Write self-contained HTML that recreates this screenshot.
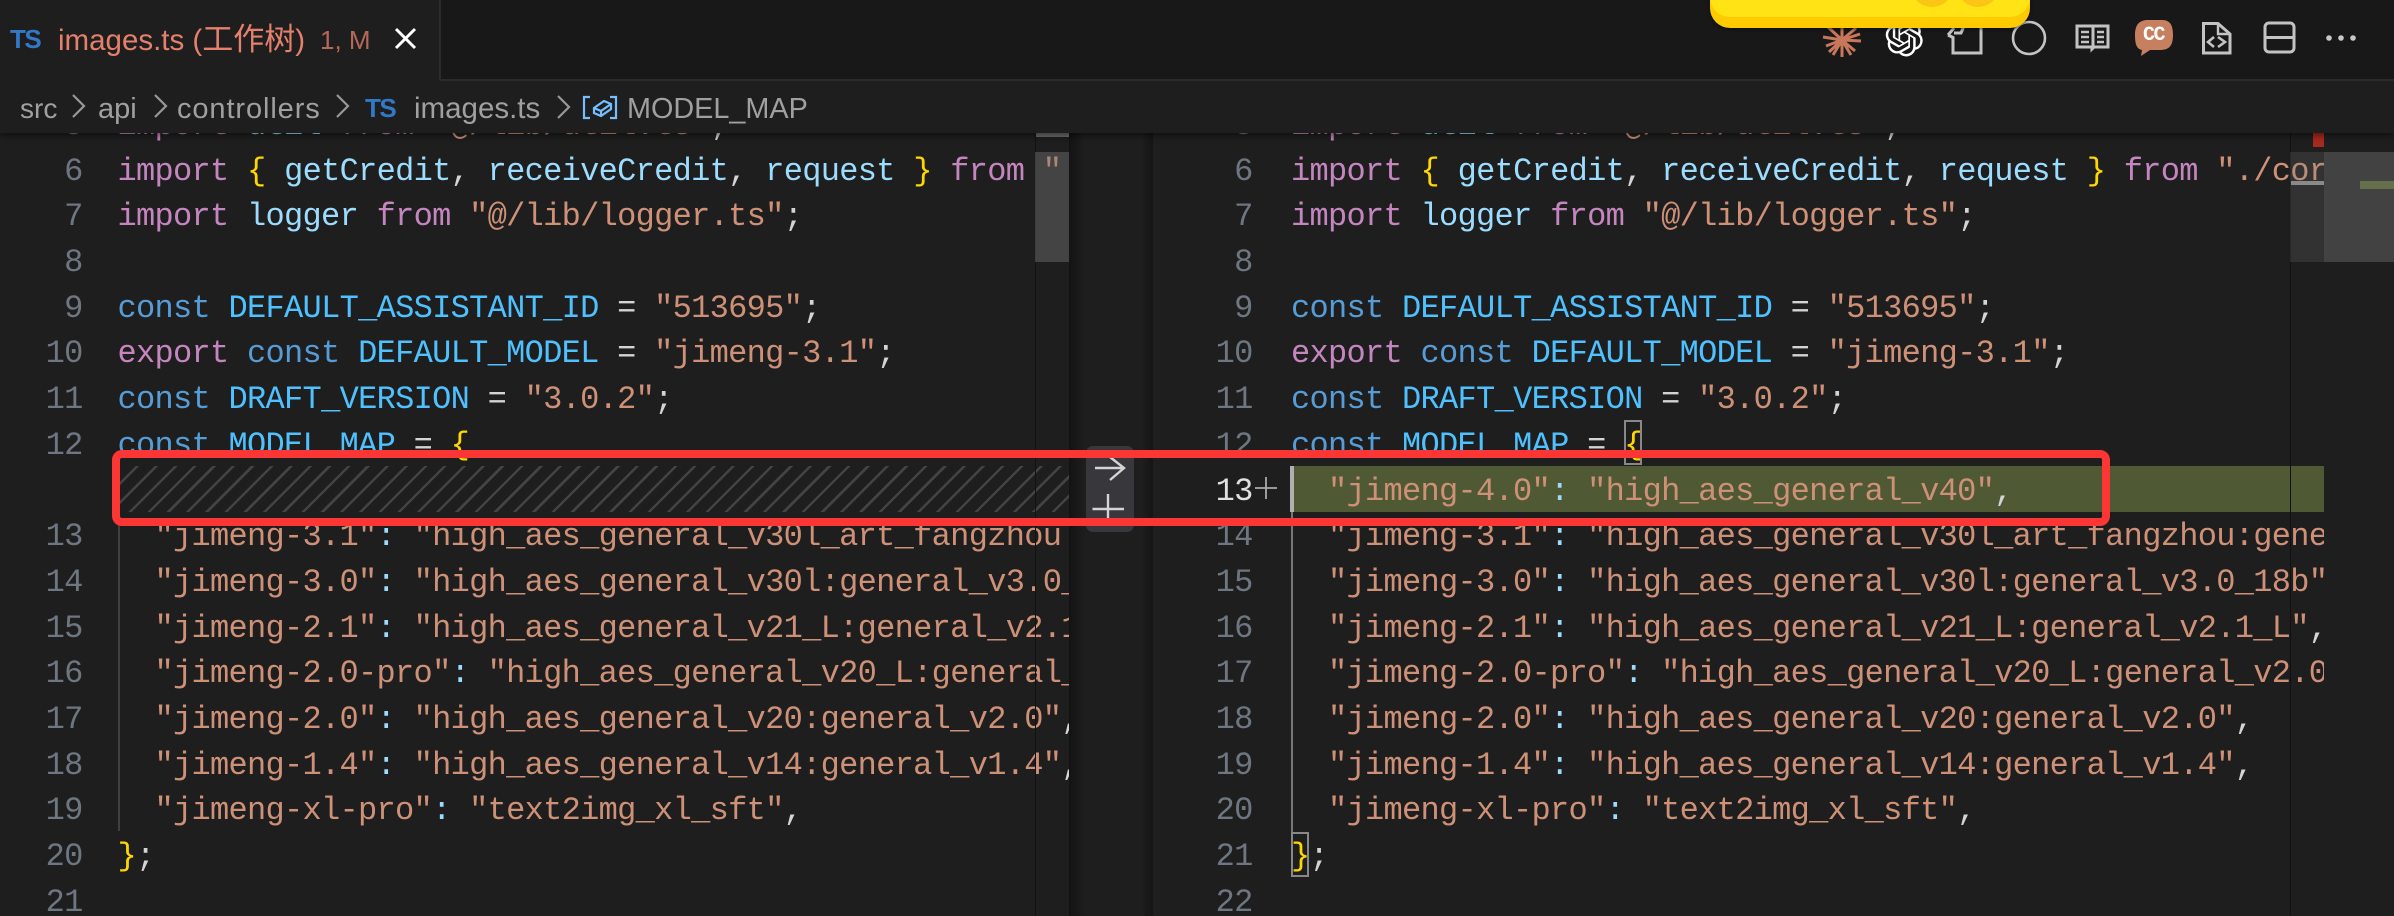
<!DOCTYPE html>
<html><head><meta charset="utf-8"><style>
html,body{margin:0;padding:0;background:#1e1e1e}
#r{position:relative;width:2394px;height:916px;overflow:hidden;background:#1e1e1e}
#r div,#r pre,#r span.a,#r svg{position:absolute}
pre{margin:0;font-family:"Liberation Mono",monospace;font-size:32px;letter-spacing:-.7px;line-height:45.7px;color:#d4d4d4;white-space:pre}
.k{color:#c586c0}.c{color:#569cd6}.v{color:#9cdcfe}.n{color:#4fc1ff}.s{color:#ce9178}.b{color:#ffd700}
.g{color:#6e7681;text-align:right}
.t{font-family:"Liberation Sans","Noto Sans CJK SC",sans-serif;white-space:nowrap;line-height:40px}
</style></head><body><div id="r">

<!-- left pane -->
<div style="left:0;top:100px;width:1069px;height:816px;overflow:hidden">
<pre class="g" style="left:0;top:2.9px;width:82.7px">5
6
7
8
9
10
11
12

13
14
15
16
17
18
19
20
21</pre>
<pre style="left:117.5px;top:2.9px"><span class="k">import</span> <span class="v">util</span> <span class="k">from</span> <span class="s">"@/lib/util.ts"</span>;
<span class="k">import</span> <span class="b">{</span> <span class="v">getCredit</span>, <span class="v">receiveCredit</span>, <span class="v">request</span> <span class="b">}</span> <span class="k">from</span> <span class="s">"./core.ts"</span>;
<span class="k">import</span> <span class="v">logger</span> <span class="k">from</span> <span class="s">"@/lib/logger.ts"</span>;

<span class="c">const</span> <span class="n">DEFAULT_ASSISTANT_ID</span> = <span class="s">"513695"</span>;
<span class="k">export</span> <span class="c">const</span> <span class="n">DEFAULT_MODEL</span> = <span class="s">"jimeng-3.1"</span>;
<span class="c">const</span> <span class="n">DRAFT_VERSION</span> = <span class="s">"3.0.2"</span>;
<span class="c">const</span> <span class="n">MODEL_MAP</span> = <span class="b">{</span>

  <span class="s">"jimeng-3.1"</span><span class="v">:</span> <span class="s">"high_aes_general_v30l_art_fangzhou:general_v3.0_18b"</span>,
  <span class="s">"jimeng-3.0"</span><span class="v">:</span> <span class="s">"high_aes_general_v30l:general_v3.0_18b"</span>,
  <span class="s">"jimeng-2.1"</span><span class="v">:</span> <span class="s">"high_aes_general_v21_L:general_v2.1_L"</span>,
  <span class="s">"jimeng-2.0-pro"</span><span class="v">:</span> <span class="s">"high_aes_general_v20_L:general_v2.0_L"</span>,
  <span class="s">"jimeng-2.0"</span><span class="v">:</span> <span class="s">"high_aes_general_v20:general_v2.0"</span>,
  <span class="s">"jimeng-1.4"</span><span class="v">:</span> <span class="s">"high_aes_general_v14:general_v1.4"</span>,
  <span class="s">"jimeng-xl-pro"</span><span class="v">:</span> <span class="s">"text2img_xl_sft"</span>,
<span class="b">}</span>;
</pre>
<div style="left:118px;top:412px;width:2px;height:319px;background:#404040"></div>
<div style="left:120px;top:366px;width:949px;height:46px;background:repeating-linear-gradient(135deg,#1e1e1e 0,#1e1e1e 11px,#434343 11px,#434343 13.6px)"></div>
<div style="left:1035px;top:0;width:1px;height:816px;background:#121212"></div>
<div style="left:1035px;top:52px;width:34px;height:110px;background:rgba(121,121,121,.42)"></div>
<div style="left:1036px;top:33px;width:33px;height:4px;background:#6b6b6b"></div>
</div>

<!-- centre -->
<div style="left:1069px;top:100px;width:84px;height:816px;background:linear-gradient(90deg,#131313 0,#1e1e1e 16px,#1e1e1e 72px,#151515 84px)"></div>
<div style="left:1086px;top:446px;width:48px;height:86px;border-radius:7px;background:#37373c"></div>
<svg style="left:1086px;top:446px" width="48" height="86" fill="none" stroke="#d4d4d4" stroke-width="2.4"><path d="M9 22H38M24 11L38 22L24 34"/><path d="M6.500 63H38M22 48V80"/></svg>

<!-- right pane -->
<div style="left:1153px;top:100px;width:1241px;height:816px;overflow:hidden">
<div style="left:141px;top:366px;width:1030px;height:46px;background:#4f5a34"></div>
<div style="left:137px;top:366px;width:4px;height:46px;background:#b0b0b0"></div>
<div style="left:138px;top:412px;width:2px;height:320px;background:#777"></div>
<pre class="g" style="left:0;top:2.9px;width:99.700px">5
6
7
8
9
10
11
12
<span style="color:#e0e0e0">13</span>
14
15
16
17
18
19
20
21
22</pre>
<pre style="left:138px;top:2.9px;width:1033px;overflow:hidden"><span class="k">import</span> <span class="v">util</span> <span class="k">from</span> <span class="s">"@/lib/util.ts"</span>;
<span class="k">import</span> <span class="b">{</span> <span class="v">getCredit</span>, <span class="v">receiveCredit</span>, <span class="v">request</span> <span class="b">}</span> <span class="k">from</span> <span class="s">"./core.ts"</span>;
<span class="k">import</span> <span class="v">logger</span> <span class="k">from</span> <span class="s">"@/lib/logger.ts"</span>;

<span class="c">const</span> <span class="n">DEFAULT_ASSISTANT_ID</span> = <span class="s">"513695"</span>;
<span class="k">export</span> <span class="c">const</span> <span class="n">DEFAULT_MODEL</span> = <span class="s">"jimeng-3.1"</span>;
<span class="c">const</span> <span class="n">DRAFT_VERSION</span> = <span class="s">"3.0.2"</span>;
<span class="c">const</span> <span class="n">MODEL_MAP</span> = <span class="b">{</span>
  <span class="s">"jimeng-4.0"</span><span class="v">:</span> <span class="s">"high_aes_general_v40"</span>,
  <span class="s">"jimeng-3.1"</span><span class="v">:</span> <span class="s">"high_aes_general_v30l_art_fangzhou:general_v3.0_18b"</span>,
  <span class="s">"jimeng-3.0"</span><span class="v">:</span> <span class="s">"high_aes_general_v30l:general_v3.0_18b"</span>,
  <span class="s">"jimeng-2.1"</span><span class="v">:</span> <span class="s">"high_aes_general_v21_L:general_v2.1_L"</span>,
  <span class="s">"jimeng-2.0-pro"</span><span class="v">:</span> <span class="s">"high_aes_general_v20_L:general_v2.0_L"</span>,
  <span class="s">"jimeng-2.0"</span><span class="v">:</span> <span class="s">"high_aes_general_v20:general_v2.0"</span>,
  <span class="s">"jimeng-1.4"</span><span class="v">:</span> <span class="s">"high_aes_general_v14:general_v1.4"</span>,
  <span class="s">"jimeng-xl-pro"</span><span class="v">:</span> <span class="s">"text2img_xl_sft"</span>,
<span class="b">}</span>;
</pre>
<div style="left:471px;top:320px;width:18px;height:45px;box-sizing:border-box;border:2px solid #888"></div>
<div style="left:138px;top:732px;width:18px;height:45px;box-sizing:border-box;border:2px solid #888"></div>
<svg style="left:101px;top:376px" width="24" height="24" fill="none" stroke="#aaa" stroke-width="1.800"><path d="M1 12H23M12 1V23"/></svg>
<div style="left:1137px;top:0;width:1px;height:816px;background:#111"></div>
<div style="left:1137px;top:52px;width:34px;height:110px;background:rgba(121,121,121,.22)"></div>
<div style="left:1138px;top:81px;width:33px;height:4px;background:#8a8a8a"></div>
<div style="left:1160px;top:33px;width:11px;height:14px;background:#a52a20"></div>
<div style="left:1171px;top:52px;width:70px;height:110px;background:#424242"></div>
<div style="left:1207px;top:81px;width:34px;height:8px;background:#656f4c"></div>
</div>

<!-- breadcrumb -->
<div style="left:0;top:80px;width:2394px;height:53px;background:#1e1e1e;box-shadow:0 3px 6px rgba(0,0,0,.45)"></div>
<!-- tab bar -->
<div style="left:0;top:0;width:2394px;height:80px;background:#181818"></div>
<div style="left:440px;top:79px;width:1954px;height:2px;background:#2b2b2b"></div>
<div style="left:0;top:0;width:439px;height:81px;background:#1e1e1e"></div>
<div style="left:439px;top:0;width:2px;height:80px;background:#2b2b2b"></div>

<div class="t" style="left:10px;top:19px;font-size:26px;font-weight:bold;letter-spacing:-1.500px;color:#3178c6">TS</div>
<div class="t" style="left:58px;top:20px;font-size:29.500px;color:#e5806d">images.ts (<span style="font-size:31px">工作树</span>)</div>
<div class="t" style="left:320px;top:20px;font-size:26px;color:#b5685a">1, M</div>
<svg style="left:394px;top:27px" width="23" height="23" fill="none" stroke="#fff" stroke-width="3"><path d="M2 2L21 21M21 2L2 21"/></svg>

<div class="t" style="left:20px;top:89px;font-size:28px;color:#a0a0a0">src</div>
<div class="t" style="left:98px;top:89px;font-size:29px;color:#a0a0a0">api</div>
<div class="t" style="left:177px;top:89px;font-size:29px;letter-spacing:.9px;color:#a0a0a0">controllers</div>
<div class="t" style="left:365px;top:88px;font-size:26px;font-weight:bold;letter-spacing:-1.500px;color:#3178c6">TS</div>
<div class="t" style="left:414px;top:89px;font-size:29.500px;color:#a0a0a0">images.ts</div>
<div class="t" style="left:627px;top:89px;font-size:28.800px;color:#a0a0a0">MODEL_MAP</div>
<svg style="left:0;top:80px" width="800" height="50" fill="none" stroke="#989898" stroke-width="2.200"><path d="M73 15L84 26L73 37M155 15L166 26L155 37M337 15L348 26L337 37M558 16L569 27L558 38"/>
<g stroke="#75beff"><path d="M590 17H584V38H590M610 17H616V38H610"/><path d="M594 28L604 21L611 24V29L601 36L594 33ZM594 28L601 31L611 24M601 31V36"/></g></svg>

<!-- top right icons -->
<svg style="left:1800px;top:0" width="594" height="70" fill="none" stroke="#c3c3c3" stroke-width="3">
<g stroke="#c9775a" stroke-width="3"><path d="M42 40V57M42 40V22M42 40L23 37M42 40L61 41M42 40L29 52M42 40L55 51M42 40L28 27M42 40L56 28M42 40L33 55M42 40L51 55M42 40L26 46M42 40L60 34"/></g>
<path transform="translate(85.500 19) scale(1.560)" stroke="none" fill="#fff" d="M22.282 9.821a5.985 5.985 0 0 0-.516-4.91 6.046 6.046 0 0 0-6.51-2.9A6.065 6.065 0 0 0 4.981 4.18a5.985 5.985 0 0 0-3.998 2.9 6.046 6.046 0 0 0 .743 7.097 5.98 5.98 0 0 0 .51 4.911 6.051 6.051 0 0 0 6.515 2.9A5.985 5.985 0 0 0 13.26 24a6.056 6.056 0 0 0 5.772-4.206 5.99 5.99 0 0 0 3.997-2.9 6.056 6.056 0 0 0-.747-7.073zM13.26 22.43a4.476 4.476 0 0 1-2.876-1.04l.141-.081 4.779-2.758a.795.795 0 0 0 .392-.681v-6.737l2.02 1.168a.071.071 0 0 1 .038.052v5.583a4.504 4.504 0 0 1-4.494 4.494zM3.6 18.304a4.47 4.47 0 0 1-.535-3.014l.142.085 4.783 2.759a.771.771 0 0 0 .78 0l5.843-3.369v2.332a.08.08 0 0 1-.033.062L9.74 19.95a4.5 4.5 0 0 1-6.14-1.646zM2.34 7.896a4.485 4.485 0 0 1 2.366-1.973V11.6a.766.766 0 0 0 .388.676l5.815 3.355-2.02 1.168a.076.076 0 0 1-.071 0l-4.83-2.786A4.504 4.504 0 0 1 2.34 7.872zm16.597 3.855l-5.833-3.387L15.119 7.2a.076.076 0 0 1 .071 0l4.83 2.791a4.494 4.494 0 0 1-.676 8.105v-5.678a.79.79 0 0 0-.407-.667zm2.01-3.023l-.141-.085-4.774-2.782a.776.776 0 0 0-.785 0L9.409 9.23V6.897a.066.066 0 0 1 .028-.061l4.83-2.787a4.5 4.500 0 0 1 6.68 4.66zm-12.64 4.135l-2.02-1.164a.08.08 0 0 1-.038-.057V6.075a4.5 4.500 0 0 1 7.375-3.453l-.142.08L8.704 5.46a.795.795 0 0 0-.393.681zm1.097-2.365l2.602-1.5 2.607 1.5v2.999l-2.597 1.5-2.607-1.5z"/>
<path d="M153 37V53H181V26M148 35L154 28M148 35L154 38M154 33H161L164 26"/>
<circle cx="229" cy="38" r="16" stroke-width="2.600"/>
<path d="M292 26H277V47H292L292 49L294 47H308V26H293V47M292 26"/><path stroke-width="2.400" d="M281 32H289M281 37H289M281 42H289M297 32H304M297 37H304M297 42H304"/>
<path stroke="none" fill="#c67f5f" d="M348 20H362C370 20 373 25 373 35C373 46 369 50 360 50H350L341 56L342 50C337 49 335 45 335 35C335 25 339 20 348 20Z"/>
<path d="M403.500 23.500H418L430 34V53H403.500Z"/><path stroke-width="2.400" d="M418 23.500V34H430"/><path stroke-width="2.600" d="M414 37L408 42L414 47M418 37L425 42L418 47"/>
<rect x="465" y="23" width="29" height="29" rx="4"/><path d="M465 37.500H494"/>
<g stroke="none" fill="#c8c8c8"><circle cx="529" cy="38" r="2.800"/><circle cx="541" cy="38" r="2.800"/><circle cx="553" cy="38" r="2.800"/></g>
</svg>
<div class="t" style="left:2143px;top:16px;font-family:'Liberation Mono',monospace;font-size:20px;font-weight:bold;letter-spacing:-1.500px;color:#fff">CC</div>

<!-- yellow overlay -->
<div style="left:1710px;top:-30px;width:320px;height:58px;border-radius:0 0 20px 20px;background:#fdcb00;box-shadow:0 1px 3px rgba(0,0,0,.6);overflow:hidden">
<div style="left:0;top:0;width:320px;height:47px;border-radius:0 0 20px 20px;background:#ffe314"></div>
<div style="left:200px;top:-8px;width:44px;height:45px;border-radius:50%;background:#fac515"></div>
<div style="left:246px;top:-8px;width:44px;height:45px;border-radius:50%;background:#fac515"></div>
</div>

<!-- red annotation -->
<div style="left:112px;top:450px;width:1998px;height:76px;box-sizing:border-box;border:8px solid #fc3535;border-radius:10px"></div>
</div></body></html>
